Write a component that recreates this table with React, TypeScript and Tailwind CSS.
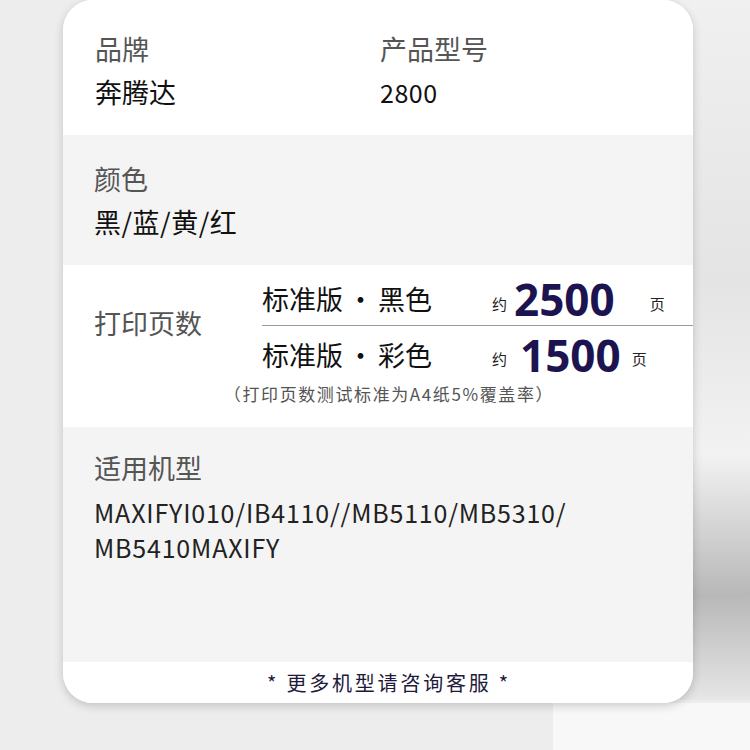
import React from "react";

const cjk = { fontFamily: '"Noto Sans CJK SC", "Noto Sans", sans-serif' };
const num = { fontFamily: '"Noto Sans", sans-serif' };

export default function App() {
  return (
    <div
      className="relative w-[750px] h-[750px] overflow-hidden bg-[#ededed]"
      style={cjk}
    >
      {/* decorative background */}
      <div className="absolute left-[553px] top-[703px] w-[197px] h-[47px] bg-[#f8f8f8]" />
      <div className="absolute left-[680px] top-[0px] w-[70px] h-[700px] bg-[linear-gradient(180deg,#f0f0f0_0%,#e4e4e4_40%,#f2f2f2_65%,#b8b8b8_85%,#e6e6e6_100%)]" />

      <div className="relative ml-[63px] w-[630px] h-[703px] rounded-[30px] bg-white overflow-hidden shadow-[0_3px_10px_rgba(0,0,0,0.18)] flex flex-col">
        {/* brand / model */}
        <div className="h-[135px] bg-white pt-[31px] pl-[32px] flex">
          <div className="w-[285px] flex flex-col gap-[7px]">
            <div className="text-[27px] leading-[36px] text-[#555]">品牌</div>
            <div className="text-[27px] leading-[36px] text-[#111]">奔腾达</div>
          </div>
          <div className="flex flex-col gap-[7px]">
            <div className="text-[27px] leading-[36px] text-[#555]">产品型号</div>
            <div className="text-[25px] leading-[36px] text-[#111] tracking-[0.5px]">2800</div>
          </div>
        </div>

        {/* color */}
        <div className="h-[130px] bg-[#f4f4f4] pt-[26px] pl-[31px] flex flex-col gap-[7px]">
          <div className="text-[27px] leading-[36px] text-[#555]">颜色</div>
          <div className="text-[27px] leading-[36px] text-[#111] tracking-[0.5px]">黑/蓝/黄/红</div>
        </div>

        {/* pages */}
        <div className="h-[162px] bg-white flex flex-col">
          <div className="flex items-center h-[117px]">
            <div className="w-[199px] pl-[31px] text-[27px] leading-[36px] text-[#555] pb-[2px]">
              打印页数
            </div>
            <div className="flex-1 flex flex-col">
              <div className="h-[61px] flex items-center border-b border-[#9a9a9a] pt-[8px]">
                <div className="w-[230px] text-[27px] leading-[36px] text-[#111] flex">
                  <span>标准版</span>
                  <span className="px-[4px]">·</span>
                  <span>黑色</span>
                </div>
                <div className="text-[15px] text-[#222] mt-[10px] w-[22px]">约</div>
                <div className="text-[44px] leading-[44px] font-bold text-[#1c1450]" style={num}>
                  2500
                </div>
                <div className="text-[15px] text-[#222] mt-[10px] ml-[35px]">页</div>
              </div>
              <div className="h-[56px] flex items-center pt-[1px]">
                <div className="w-[230px] text-[27px] leading-[36px] text-[#111] flex">
                  <span>标准版</span>
                  <span className="px-[4px]">·</span>
                  <span>彩色</span>
                </div>
                <div className="text-[15px] text-[#222] mt-[10px] w-[28px]">约</div>
                <div className="text-[44px] leading-[44px] font-bold text-[#1c1450]" style={num}>
                  1500
                </div>
                <div className="text-[15px] text-[#222] mt-[10px] ml-[11px]">页</div>
              </div>
            </div>
          </div>
          <div className="text-center text-[17px] leading-[24px] text-[#555] tracking-[1.6px] pl-[22px]">
            （打印页数测试标准为A4纸5%覆盖率）
          </div>
        </div>

        {/* models */}
        <div className="h-[235px] bg-[#f4f4f4] pt-[23px] pl-[31px] flex flex-col">
          <div className="text-[27px] leading-[36px] text-[#555]">适用机型</div>
          <div className="mt-[9px] text-[25px] leading-[35px] text-[#222] tracking-[0.8px]">
            MAXIFYI010/IB4110//MB5110/MB5310/
            <br />
            MB5410MAXIFY
          </div>
        </div>

        {/* footer */}
        <div className="flex-1 bg-white flex items-center justify-center pl-[22px]">
          <div className="text-[20px] leading-[28px] text-[#1e1a3a] tracking-[2.8px]">
            * 更多机型请咨询客服 *
          </div>
        </div>
      </div>
    </div>
  );
}
